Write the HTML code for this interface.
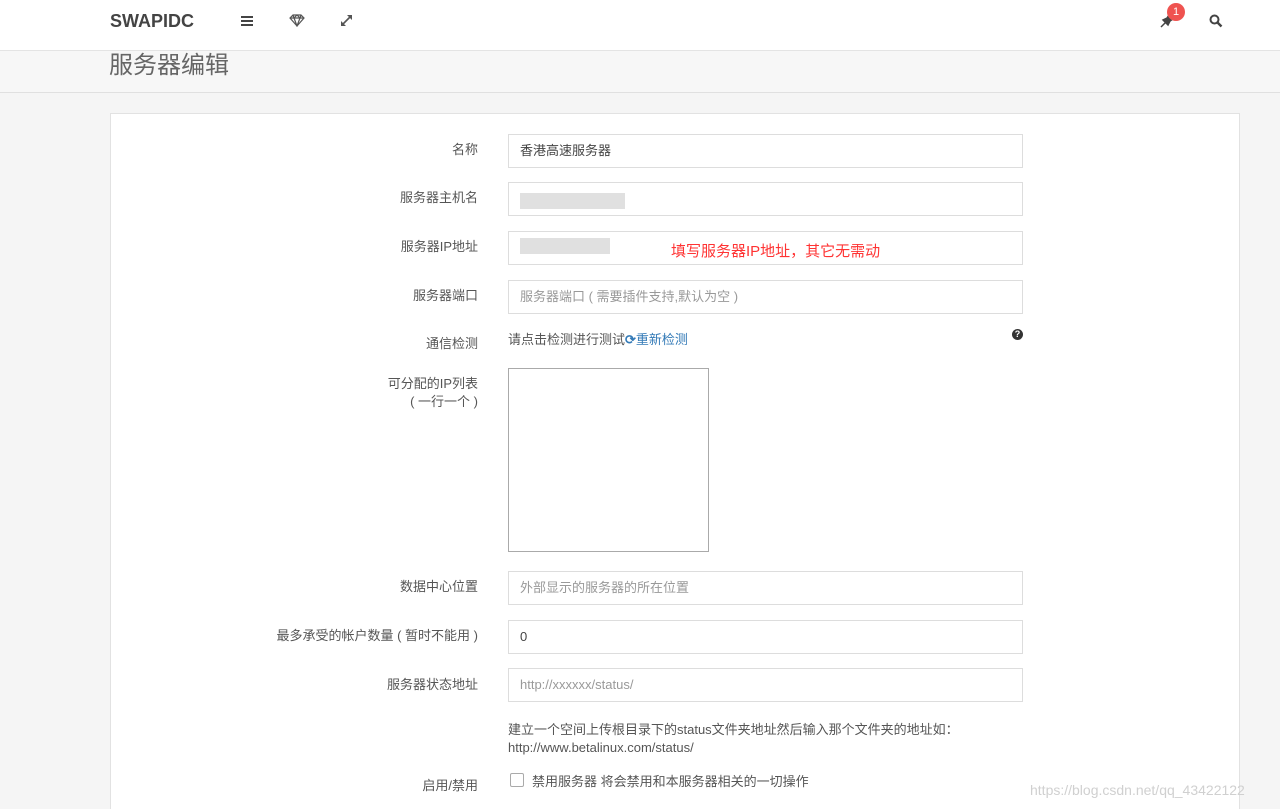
<!DOCTYPE html>
<html><head><meta charset="utf-8"><style>
*{box-sizing:border-box;margin:0;padding:0}
html,body{width:1280px;height:809px;overflow:hidden}
body{background:#f5f5f5;font-family:"Liberation Sans","Noto Sans CJK SC",sans-serif;font-size:13px;color:#555;position:relative}
.nav{position:absolute;left:0;top:0;width:1280px;height:51px;background:#fff;border-bottom:1px solid #e4e4e4}
.logo{position:absolute;left:110px;top:11px;font-size:18px;font-weight:bold;color:#444}
.hdr{position:absolute;left:0;top:51px;width:1280px;height:42px;border-bottom:1px solid #e0e0e0;background:#f7f7f7}
.hdr h1{position:absolute;left:109px;top:-6px;font-size:24px;font-weight:normal;color:#666}
.panel{position:absolute;left:110px;top:113px;width:1130px;height:720px;background:#fff;border:1px solid #e2e2e2}
.lbl{position:absolute;right:802px;text-align:right;color:#555;font-size:13px;line-height:18px}
.inp{position:absolute;left:508px;width:515px;height:34px;border:1px solid #ddd;background:#fff;padding-left:11px;line-height:32px;font-size:13px;color:#555}
.ph{color:#999}
.blur{position:absolute;height:16px;background:#e0e0e0}
</style></head><body>
<div class="nav">
<div class="logo">SWAPIDC</div>
<svg style="position:absolute;left:241px;top:15px" width="12" height="12"><rect x="0" y="1" width="12" height="2" fill="#444"/><rect x="0" y="5" width="12" height="2" fill="#444"/><rect x="0" y="9" width="12" height="2" fill="#444"/></svg>
<svg style="position:absolute;left:289px;top:14px" width="16" height="13" viewBox="0 0 16 13"><path d="M1 4 L4 1 H12 L15 4 L8 12 Z M1 4 H15 M5 4 L8 12 L11 4 M4 1 L5 4 L8 1 L11 4 L12 1" fill="none" stroke="#555" stroke-width="1.2"/></svg>
<svg style="position:absolute;left:340px;top:14px" width="13" height="13" viewBox="0 0 13 13"><path d="M7 1 H12 V6 Z M1 7 V12 H6 Z" fill="#555"/><path d="M11 2 L2 11" stroke="#555" stroke-width="1.6"/></svg>
<svg style="position:absolute;left:1160px;top:14px" width="14" height="14" viewBox="0 0 14 14"><path d="M9 1 L13 5 L10 7 L8 11 L3 6 L7 4 Z M5 9 L1 13" fill="#444" stroke="#444" stroke-width="1.5"/></svg>
<div style="position:absolute;left:1167px;top:3px;width:18px;height:18px;border-radius:9px;background:#ef5350;color:#fff;font-size:11px;text-align:center;line-height:18px">1</div>
<svg style="position:absolute;left:1209px;top:14px" width="14" height="14" viewBox="0 0 14 14"><circle cx="5.5" cy="5.5" r="4" fill="none" stroke="#444" stroke-width="2"/><path d="M8.5 8.5 L12.5 12.5" stroke="#444" stroke-width="2.4"/></svg>
</div>
<div class="hdr"><h1>服务器编辑</h1></div>
<div class="panel"></div>

<div class="lbl" style="top:141px">名称</div>
<div class="inp" style="top:134px;color:#444">香港高速服务器</div>
<div class="lbl" style="top:189px">服务器主机名</div>
<div class="inp" style="top:182px"></div>
<div class="blur" style="left:520px;top:193px;width:105px"></div>
<div class="lbl" style="top:238px">服务器IP地址</div>
<div class="inp" style="top:231px"></div>
<div class="blur" style="left:520px;top:238px;width:90px"></div>
<div style="position:absolute;left:671px;top:240px;color:#f33;font-size:15px">填写服务器IP地址，其它无需动</div>
<div class="lbl" style="top:287px">服务器端口</div>
<div class="inp ph" style="top:280px">服务器端口 ( 需要插件支持,默认为空 )</div>
<div class="lbl" style="top:335px">通信检测</div>
<div style="position:absolute;left:508px;top:329px;color:#555">请点击检测进行测试<span style="color:#337ab7"><b>⟳</b>重新检测</span></div>
<div style="position:absolute;left:1012px;top:329px;width:11px;height:11px;border-radius:6px;background:#333;color:#fff;font-size:9px;text-align:center;line-height:11px;font-weight:bold">?</div>
<div class="lbl" style="top:375px">可分配的IP列表<br>( 一行一个 )</div>
<div style="position:absolute;left:508px;top:368px;width:201px;height:184px;border:1px solid #aaa;background:#fff"></div>
<div class="lbl" style="top:578px">数据中心位置</div>
<div class="inp ph" style="top:571px">外部显示的服务器的所在位置</div>
<div class="lbl" style="top:627px">最多承受的帐户数量 ( 暂时不能用 )</div>
<div class="inp" style="top:620px;color:#444">0</div>
<div class="lbl" style="top:676px">服务器状态地址</div>
<div class="inp ph" style="top:668px">http://xxxxxx/status/</div>
<div style="position:absolute;left:508px;top:721px;line-height:18px;color:#555">建立一个空间上传根目录下的status文件夹地址然后输入那个文件夹的地址如：<br>http://www.betalinux.com/status/</div>
<div class="lbl" style="top:777px">启用/禁用</div>
<div style="position:absolute;left:510px;top:773px;width:14px;height:14px;border:1px solid #aaa;border-radius:2px;background:#fff"></div>
<div style="position:absolute;left:532px;top:771px;color:#555">禁用服务器 将会禁用和本服务器相关的一切操作</div>
<div style="position:absolute;left:1030px;top:782px;color:#d0d0d0;font-size:14px">https://blog.csdn.net/qq_43422122</div>
</body></html>
